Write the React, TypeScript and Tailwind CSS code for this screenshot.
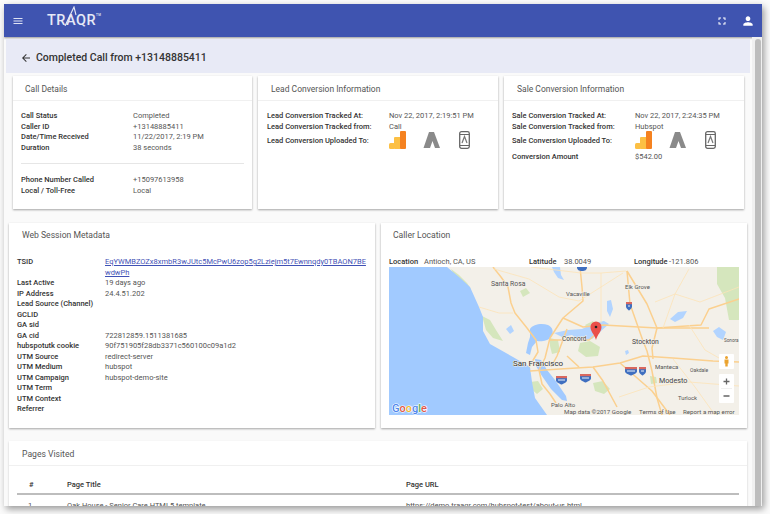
import React from 'react';

const Row = ({ label, value, labelW }: { label: string; value?: React.ReactNode; labelW: string }) => (
  <div className="flex min-h-[10.5px] leading-[10.5px]">
    <div className={`${labelW} shrink-0 font-medium text-[#333]`}>{label}</div>
    <div className="min-w-0 flex-1 text-[#555]">{value}</div>
  </div>
);

const Card = ({ title, children, className }: { title: string; children: React.ReactNode; className: string }) => (
  <div className={`bg-white shadow-[0_1px_2px_rgba(0,0,0,0.35)] ${className}`}>
    <div className="flex h-[25px] items-center border-b border-[#f0f0f0] pt-[2px] text-[8.5px] text-[#555]">{title}</div>
    {children}
  </div>
);

function MdIcon({ d, className }: { d: string; className: string }) {
  return (
    <svg viewBox="0 0 24 24" className={className} fill="currentColor">
      <path d={d} />
    </svg>
  );
}

function UploadIcons() {
  return (
    <div className="flex items-start">
      {/* analytics */}
      <svg viewBox="0 0 17 18" className="h-[18px] w-[17px]">
        <rect x="0" y="12" width="6" height="6" rx="1.5" fill="#fcc044" />
        <rect x="5" y="6" width="7" height="12" rx="1" fill="#fcc044" />
        <rect x="11" y="0" width="6" height="18" rx="1" fill="#f58220" />
      </svg>
      {/* adwords */}
      <svg viewBox="0 0 17 18" className="ml-[17px] h-[18px] w-[17px]">
        <path d="M6 1h5l6 16h-5l-2.500-7-2.500 7H0.500z" fill="#8a8a8a" />
      </svg>
      {/* adwords mobile */}
      <svg viewBox="0 0 11 18" className="ml-[19px] h-[18px] w-[11px]" fill="none">
        <rect x="0.7" y="0.7" width="9.6" height="16.6" rx="1.8" stroke="#666" strokeWidth="1.3" />
        <path d="M1 3.500h9M1 14.500h9" stroke="#666" strokeWidth="1" />
        <path d="M3 12l2.500-6.500L8 12" stroke="#777" strokeWidth="1.2" />
      </svg>
    </div>
  );
}

const Shield = ({ x, y, w }: { x: number; y: number; w: number }) => (
  <g transform={`translate(${x} ${y})`}>
    <path d={`M0 0h${w}v4.500c0 2-${w / 2} 4-${w / 2} 4s-${w / 2}-2-${w / 2}-4z`} fill="#3f6fc0" />
    <path d={`M0 0h${w}v2.200h-${w}z`} fill="#d9685f" />
    <path d={`M2 4h${w - 4}`} stroke="#fff" strokeWidth="0.9" />
  </g>
);

const Place = ({ x, y, size, fill = '#555', children }: { x: number; y: number; size: number; fill?: string; children: string }) => (
  <text x={x} y={y} fontSize={size} fill={fill} stroke="#f3f0e9" strokeWidth="1.2" paintOrder="stroke">
    {children}
  </text>
);

function MapPicture() {
  return (
    <svg viewBox="0 0 350 148" className="block h-[148px] w-[350px] font-['Roboto',sans-serif]">
      <rect width="350" height="148" fill="#f3f0e9" />
      {/* greens */}
      <g fill="#d5e6bd">
        <path d="M328 0h22v53h-10l-4-22-8-14z" />
        <path d="M62 2l8 6 8 8 4 6-8-4-8-8z" />
        <path d="M93 49l8 4 6 10 7 11-10-3-7-8z" />
        <path d="M191 76l10-2 10 6-2 9-12 1-8-6z" />
        <path d="M161 71l8 2 2 12-8 2-2-8z" />
        <path d="M204 116l10-2 7 8-6 5-9-3z" />
        <path d="M141 115l8-1 5 8-6 5-7-6z" />
        <path d="M261 109l6 1 1 6-6 1z" />
        <path d="M196 58l8-4 3 6-6 4z" />
        <path d="M131 24l6-3 4 5-7 4z" />
      </g>
      {/* ocean and bays */}
      <path d="M0 0h58l12 10 11 10 9 20 4 10v14l7 13 23 13 17 10 2 15 3 16 12 17H0z" fill="#a1caff" />
      <path d="M141 62c3-5 12-6 18-4 5 2 6 8 3 12-3 4-10 5-14 4l-5 6-2 8-4-2 2-10 2-6z" fill="#a1caff" />
      <path d="M146 92l6 1 6 10 8 10 11 16 1 5-5-1-11-11-9-13-6-10z" fill="#a1caff" />
      <path d="M165 66l14-3 14-1 12-6 10-2 5 3-8 7-9 8-12 2-8-6-10 2z" fill="#b2d4ff" />
      <path d="M163 0l8 0 1 8 3 5-6-2-4-6zM218 34l4-1 2 9-3 8-3-6zM281 52l8-7 9-1-4 7-8 4zM324 64l6-4 7 5-3 8-6-3zM236 84l3-1 1 3-3 2zM117 62l5-4 3 6-4 3z" fill="#b2d4ff" />
      {/* roads */}
      <g fill="none" stroke="#fbd08f" strokeWidth="1.5" strokeLinejoin="round">
        <path d="M104 0l8 10 7 10 3 16 4 10 12 15 9 12 2 12-9 15" />
        <path d="M191 0l2 20 1 14-20 17-13 20-2 8-3 12-6 12 3 14 8 10 6 9" />
        <path d="M238 4l3 33 13 37 4 10 5 20 5 27 5 17" />
        <path d="M238 4l20 33 10 24-5 20 1 11" />
        <path d="M141 104l30-2 33-2 27-4 23-7 30 2 40 3 26 1" />
        <path d="M231 96l32 28 18 24" />
        <path d="M174 51l20 9 20-2 54 3h52" />
        <path d="M160 73h40l8-7M178 62l-10 27-6 11M190 100l-12-11" />
        <path d="M268 61l44-3 8-16 30-10" />
        <path d="M204 100l10 14 14 26" />
      </g>
      <g fill="none" stroke="#fde3b7" strokeWidth="0.8">
        <path d="M105 2l35 10 30 18 20 4 44-28M237 4l-25 2-20 0-50-6" />
        <path d="M212 6v50M266 35l20-8 25 8 39-15M300 2l-14 25-12 34" />
        <path d="M300 58l16 25 14 8M284 92l22 28 20 28M90 40l20 6 14 0" />
        <path d="M230 130l30-10 40-5 50 4" />
      </g>
      {/* shields */}
      <path d="M188 0h10c0 3-2 4-5 4s-5-1-5-4z" fill="#3f6fc0" />
      <Shield x={237} y={35} w={6} />
      <Shield x={167} y={109} w={11} />
      <Shield x={191} y={107} w={11} />
      <Shield x={236} y={100} w={12} />
      <Shield x={250} y={100} w={7} />
      {/* labels */}
      <Place x={102} y={19} size={6.8}>Santa Rosa</Place>
      <Place x={177} y={29} size={6}>Vacaville</Place>
      <Place x={236} y={22} size={6}>Elk Grove</Place>
      <Place x={173} y={74} size={6.500} fill="#444">Concord</Place>
      <Place x={243} y={77} size={6.800} fill="#444">Stockton</Place>
      <Place x={124} y={99} size={8} fill="#333">San Francisco</Place>
      <Place x={266} y={102} size={6}>Manteca</Place>
      <Place x={301} y={105} size={5}>Oakdale</Place>
      <Place x={270} y={116} size={7.200} fill="#444">Modesto</Place>
      <Place x={289} y={133} size={5.800}>Turlock</Place>
      <Place x={162} y={140} size={6}>Palo Alto</Place>
      <Place x={335} y={75} size={4.600}>Sonora</Place>
      {/* footer */}
      <text x="175" y="147" fill="#555" fontSize="6.200">Map data ©2017 Google</text>
      <text x="250" y="147" fill="#555" fontSize="6.200">Terms of Use</text>
      <text x="294" y="147" fill="#555" fontSize="6.200">Report a map error</text>
      {/* google */}
      <text x="3" y="145" fontSize="11" fontWeight="500" stroke="#fff" strokeWidth="1.2" paintOrder="stroke">
        <tspan fill="#4f86ec">G</tspan><tspan fill="#e2584a">o</tspan><tspan fill="#efb730">o</tspan><tspan fill="#4f86ec">g</tspan><tspan fill="#4faf62">l</tspan><tspan fill="#e2584a">e</tspan>
      </text>
      {/* pin */}
      <path d="M207 73c-1.500-6-5.500-8-5.500-13a5.500 5.500 0 0 1 11 0c0 5-4 7-5.500 13z" fill="#ea4f4a" />
      <circle cx="207" cy="60" r="1.300" fill="#222" />
      {/* pegman and zoom */}
      <rect x="330" y="87" width="15" height="15" rx="1" fill="#fff" />
      <path d="M337.500 89a1.500 1.500 0 1 1 0 3 1.500 1.500 0 1 1 0-3zM335.500 92.500h4v4h-.8v3h-2.400v-3h-.8z" fill="#eba32f" />
      <rect x="330" y="107" width="15" height="29" rx="1" fill="#fff" />
      <path d="M332 121.500h11" stroke="#e6e6e6" strokeWidth="0.6" />
      <path d="M337.500 111.500v6M334.500 114.500h6M334.500 129h6" stroke="#666" strokeWidth="1.300" />
    </svg>
  );
}

export default function App() {
  const meta = 'w-[88px]';
  return (
    <div className="h-[514px] w-[770px] overflow-hidden bg-[#fbfbfb] pl-[4px] pt-[4px] font-['Roboto',sans-serif] text-[7.5px]">
      <div className="flex h-[502px] w-[758px] flex-col overflow-hidden bg-[#fafafa] shadow-[2px_3px_7px_rgba(0,0,0,0.4)]">
        {/* Top bar */}
        <div className="flex h-[33px] shrink-0 items-center bg-[#3f54b0] pl-[8px] pr-[7px] text-white shadow-[0_1px_2px_rgba(0,0,0,0.4)]">
          <MdIcon d="M3 18h18v-2H3v2zm0-5h18v-2H3v2zm0-7v2h18V6H3z" className="h-[12px] w-[12px] text-[#dfe3f4]" />
          <div className="relative ml-[23px] mt-[1px] text-[14.5px] font-medium leading-none tracking-[0.5px] text-[#e6e9f6]">
            TRAQR
            <svg viewBox="0 0 14 20" className="absolute left-[17px] top-[-8px] h-[20px] w-[14px]">
              <path d="M1 20L10 1l2 8" fill="none" stroke="#e6e9f6" strokeWidth="1.100" />
            </svg>
            <span className="absolute left-[49px] top-[0px] text-[3px] leading-none">TM</span>
          </div>
          <div className="flex-1" />
          <MdIcon d="M7 14H5v5h5v-2H7v-3zm-2-4h2V7h3V5H5v5zm12 7h-3v2h5v-5h-2v3zM14 5v2h3v3h2V5h-5z" className="h-[12px] w-[12px]" />
          <MdIcon d="M12 12c2.210 0 4-1.790 4-4s-1.790-4-4-4-4 1.790-4 4 1.790 4 4 4zm0 2c-2.670 0-8 1.340-8 4v2h16v-2c0-2.660-5.330-4-8-4z" className="ml-[13px] h-[14px] w-[14px]" />
        </div>

        <div className="flex min-h-0 flex-1">
          <div className="min-w-0 flex-1 overflow-hidden">
            {/* Title */}
            <div className="ml-[2px] mt-[2px] flex h-[34px] w-[744px] items-center bg-[#e8eaf6] pl-[14px] pt-[3px] text-[10.5px] font-medium text-[#333]">
              <MdIcon d="M20 11H7.830l5.590-5.590L12 4l-8 8 8 8 1.410-1.410L7.830 13H20v-2z" className="mr-[4px] h-[12px] w-[12px] text-[#333]" />
              Completed Call from +13148885411
            </div>

            {/* Top cards */}
            <div className="ml-[9px] mt-[3px] flex gap-[6px]">
              <Card title="Call Details" className="h-[133px] w-[239px] [&>div:first-child]:pl-[12px]">
                <div className="px-[8px] pt-[10px]">
                  <Row labelW="w-[112px]" label="Call Status" value="Completed" />
                  <Row labelW="w-[112px]" label="Caller ID" value="+13148885411" />
                  <Row labelW="w-[112px]" label="Date/Time Received" value="11/22/2017, 2:19 PM" />
                  <Row labelW="w-[112px]" label="Duration" value="38 seconds" />
                  <div className="mb-[11px] mt-[10px] border-t border-[#e6e6e6]" />
                  <Row labelW="w-[112px]" label="Phone Number Called" value="+15097613958" />
                  <Row labelW="w-[112px]" label="Local / Toll-Free" value="Local" />
                </div>
              </Card>
              <Card title="Lead Conversion Information" className="h-[133px] w-[240px] [&>div:first-child]:pl-[13px]">
                <div className="px-[9px] pt-[10px]">
                  <Row labelW="w-[122px]" label="Lead Conversion Tracked At:" value="Nov 22, 2017, 2:19:51 PM" />
                  <Row labelW="w-[122px]" label="Lead Conversion Tracked from:" value="Call" />
                  <div className="mt-[-1px] flex leading-[10.5px]">
                    <div className="w-[122px] pt-[5px] font-medium text-[#333]">Lead Conversion Uploaded To:</div>
                    <UploadIcons />
                  </div>
                </div>
              </Card>
              <Card title="Sale Conversion Information" className="h-[133px] w-[240px] [&>div:first-child]:pl-[13px]">
                <div className="px-[8px] pt-[10px]">
                  <Row labelW="w-[123px]" label="Sale Conversion Tracked At:" value="Nov 22, 2017, 2:24:35 PM" />
                  <Row labelW="w-[123px]" label="Sale Conversion Tracked from:" value="Hubspot" />
                  <div className="mt-[-1px] flex leading-[10.5px]">
                    <div className="w-[123px] pt-[5px] font-medium text-[#333]">Sale Conversion Uploaded To:</div>
                    <UploadIcons />
                  </div>
                  <div className="mt-[3px]">
                    <Row labelW="w-[123px]" label="Conversion Amount" value="$542.00" />
                  </div>
                </div>
              </Card>
            </div>

            {/* Middle row */}
            <div className="ml-[5px] mt-[14px] flex gap-[6px]">
              <div className="h-[205px] w-[366px] bg-white shadow-[0_1px_2px_rgba(0,0,0,0.35)]">
                <div className="pl-[13px] pt-[7px] text-[8.6px] leading-[11px] text-[#555]">Web Session Metadata</div>
                <div className="pl-[8px] pr-[10px] pt-[16px]">
                  <Row
                    labelW={meta}
                    label="TSID"
                    value={
                      <span className="text-[#3f51b5] underline">
                        EqYWMBZOZx8xmbR3wJUtc5McPwU6zop5g2Lziejm5t7Ewnnqdy0TBAON7BE
                        <br />
                        wdwPh
                      </span>
                    }
                  />
                  <Row labelW={meta} label="Last Active" value="19 days ago" />
                  <Row labelW={meta} label="IP Address" value="24.4.51.202" />
                  <Row labelW={meta} label="Lead Source (Channel)" />
                  <Row labelW={meta} label="GCLID" />
                  <Row labelW={meta} label="GA sid" />
                  <Row labelW={meta} label="GA cid" value="722812859.1511381685" />
                  <Row labelW={meta} label="hubspotutk cookie" value="90f751905f28db3371c560100c09a1d2" />
                  <Row labelW={meta} label="UTM Source" value="redirect-server" />
                  <Row labelW={meta} label="UTM Medium" value="hubspot" />
                  <Row labelW={meta} label="UTM Campaign" value="hubspot-demo-site" />
                  <Row labelW={meta} label="UTM Term" />
                  <Row labelW={meta} label="UTM Context" />
                  <Row labelW={meta} label="Referrer" />
                </div>
              </div>
              <div className="h-[205px] w-[366px] bg-white shadow-[0_1px_2px_rgba(0,0,0,0.35)]">
                <div className="pl-[12px] pt-[7px] text-[8.6px] leading-[11px] text-[#555]">Caller Location</div>
                <div className="pl-[8px] pt-[16px]">
                  <div className="flex h-[10px] leading-[10.5px] text-[#555]">
                    <div className="w-[140px]"><span className="inline-block w-[35px] font-medium text-[#333]">Location</span>Antioch, CA, US</div>
                    <div className="w-[105px]"><span className="inline-block w-[35px] font-medium text-[#333]">Latitude</span>38.0049</div>
                    <div><span className="inline-block w-[35px] font-medium text-[#333]">Longitude</span>-121.806</div>
                  </div>
                  <MapPicture />
                </div>
              </div>
            </div>

            {/* Pages */}
            <div className="ml-[5px] mt-[13px] h-[80px] w-[738px] bg-white shadow-[0_1px_2px_rgba(0,0,0,0.2)]">
              <div className="flex h-[25px] items-center border-b border-[#f0f0f0] pl-[13px] pt-[2px] text-[8.6px] text-[#555]">Pages Visited</div>
              <div className="mx-[8px] mt-[11px] flex h-[18px] items-start border-b-2 border-[#bdbdbd] font-medium leading-[16px] text-[#333]">
                <div className="w-[50px] pl-[12px]">#</div>
                <div className="w-[339px]">Page Title</div>
                <div>Page URL</div>
              </div>
              <div className="mx-[8px] mt-[6px] flex leading-[10px] text-[#555]">
                <div className="w-[50px] pl-[11px]">1</div>
                <div className="w-[339px]">Oak House - Senior Care HTML5 template</div>
                <div>https://demo.traagr.com/hubspot-test/about-us.html</div>
              </div>
            </div>
          </div>

          {/* Scrollbar */}
          <div className="w-[10px] shrink-0 bg-[#f0f0f0] pl-[3px] pt-[2px]">
            <div className="h-full w-[6px] rounded-t-[3px] bg-[#bdbdbd]" />
          </div>
        </div>
      </div>
    </div>
  );
}
